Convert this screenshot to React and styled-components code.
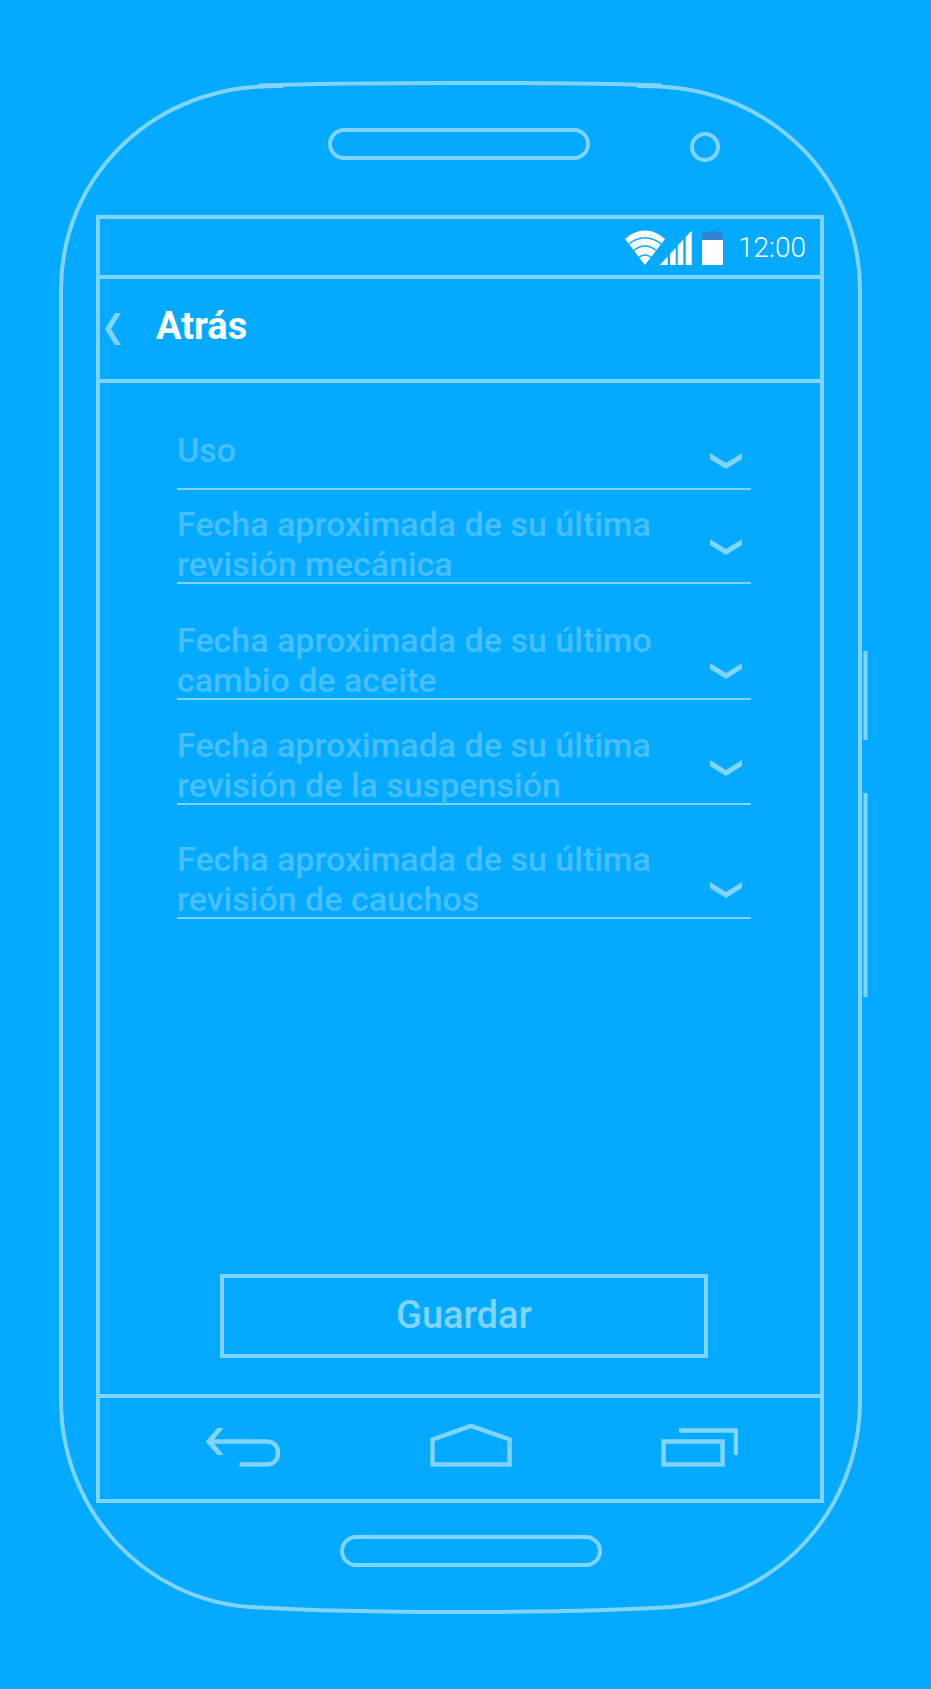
import React from "react";
import styled, { createGlobalStyle, ThemeProvider } from "styled-components";

const theme = {
  bg: "#03aaff",
  line: "#81d4fd",
  muted: "#48bffe",
  text: "#ffffff",
  battery: "#3183cf",
};

const GlobalStyle = createGlobalStyle`
  *, *::before, *::after { box-sizing: border-box; }
  body {
    margin: 0;
    background: ${theme.bg};
    font-family: Roboto, "Liberation Sans", sans-serif;
  }
  button { font-family: inherit; }
`;

const Page = styled.main`
  padding: 81px 69px 75px 59px;
`;

const Phone = styled.div`
  position: relative;
  display: flex;
  flex-direction: column;
  padding: 47px 38px 47px 37px;
`;

const Outline = styled.svg`
  position: absolute;
  inset: 0;
  width: 100%;
  height: 100%;
  overflow: visible;
  pointer-events: none;
  fill: none;
  stroke: ${(p) => p.theme.line};
  stroke-width: 4;

  path { vector-effect: non-scaling-stroke; }
`;

const PhoneTop = styled.div`
  display: grid;
  grid-template-columns: 1fr auto 1fr;
  column-gap: 100px;
  height: 34px;
  margin-bottom: 53px;
  padding-right: 2px;
`;

const Pill = styled.div`
  grid-column: 2;
  width: 262px;
  height: 32px;
  border: 4px solid ${(p) => p.theme.line};
  border-radius: 16px;
`;

const Camera = styled.div`
  align-self: end;
  width: 30px;
  height: 30px;
  border: 4px solid ${(p) => p.theme.line};
  border-radius: 50%;
`;

const PhoneBottom = styled.div`
  display: flex;
  justify-content: center;
  padding: 32px 0 0 22px;
`;

const Screen = styled.div`
  border: 4px solid ${(p) => p.theme.line};
`;

const StatusBar = styled.div`
  display: flex;
  align-items: center;
  justify-content: flex-end;
  height: 60px;
  padding-right: 14px;
  border-bottom: 4px solid ${(p) => p.theme.line};
`;

const SignalIcons = styled.svg`
  width: 67px;
  height: 35px;
  margin-right: 10px;
  fill: ${(p) => p.theme.text};
`;

const BatteryIcon = styled.svg`
  width: 21px;
  height: 35px;
  margin-right: 15px;
`;

const Clock = styled.time`
  padding-top: 1px;
  color: ${(p) => p.theme.text};
  font-size: 28px;
  font-weight: 300;
  line-height: 32px;
`;

const AppBar = styled.header`
  display: flex;
  height: 104px;
  padding: 0 5px;
  border-bottom: 4px solid ${(p) => p.theme.line};
`;

const BackButton = styled.button`
  display: flex;
  align-items: center;
  gap: 35px;
  height: 100px;
  padding: 0;
  border: 0;
  background: none;
  color: ${(p) => p.theme.text};
  font-size: 38px;
  font-weight: 700;
  line-height: 40px;
  cursor: pointer;

  svg { width: 16px; height: 32px; fill: ${(p) => p.theme.line}; }
`;

const Title = styled.span`
  padding-bottom: 6px;
`;

const Form = styled.form`
  display: flex;
  flex-direction: column;
  padding: 47px 69px 36px 77px;
`;

const Field = styled.div`
  display: grid;
  grid-template-columns: 1fr 32px;
  align-items: end;
  margin-top: ${(p) => p.$space}px;
  padding-right: 9px;
  border-bottom: 2px solid ${(p) => p.theme.line};
`;

const Label = styled.label`
  grid-area: 1 / 1;
  margin-bottom: ${(p) => (p.$single ? 18 : -2)}px;
  color: ${(p) => p.theme.muted};
  font-size: 34px;
  font-weight: 500;
  line-height: 40px;
`;

const Chevron = styled.svg`
  grid-area: 1 / 2;
  width: 32px;
  height: 16px;
  margin-bottom: ${(p) => (p.$raised ? 27 : 19)}px;
  fill: ${(p) => p.theme.line};
`;

const Select = styled.select`
  grid-area: 1 / 1 / 2 / 3;
  align-self: stretch;
  width: 100%;
  border: 0;
  background: transparent;
  appearance: none;
  cursor: pointer;
`;

const SaveButton = styled.button`
  align-self: center;
  width: 85%;
  height: 84px;
  margin-top: 355px;
  padding: 0 0 2px;
  border: 4px solid ${(p) => p.theme.line};
  background: none;
  color: ${(p) => p.theme.line};
  font-size: 38px;
  font-weight: 500;
  line-height: 40px;
  cursor: pointer;
`;

const NavBar = styled.nav`
  display: flex;
  justify-content: space-between;
  height: 105px;
  padding: 25px 82px 0 105px;
  border-top: 4px solid ${(p) => p.theme.line};
`;

const NavButton = styled.button`
  height: 44px;
  padding: 0;
  border: 0;
  background: none;
  cursor: pointer;

  svg {
    display: block;
    height: 44px;
    fill: none;
    stroke: ${(p) => p.theme.line};
    stroke-width: 4.5;
  }
`;

const fields = [
  { id: "uso", lines: ["Uso"], space: 0, single: true },
  { id: "mecanica", lines: ["Fecha aproximada de su última", "revisión mecánica"], space: 14, raised: true },
  { id: "aceite", lines: ["Fecha aproximada de su último", "cambio de aceite"], space: 36 },
  { id: "suspension", lines: ["Fecha aproximada de su última", "revisión de la suspensión"], space: 25, raised: true },
  { id: "cauchos", lines: ["Fecha aproximada de su última", "revisión de cauchos"], space: 34 },
];

function PhoneOutline() {
  return (
    <Outline viewBox="59 81 803 1533" preserveAspectRatio="none" aria-hidden="true">
      <path d="M283 86 Q275 86 262 86.5 C150 91 61 178 61 290 V1400 C61 1511 145 1600 250 1607 Q330 1612 461 1612 Q590 1612 671 1607 C776 1600 860 1511 860 1400 V290 C860 178 771 91 659 86.5 Q646 86 637 86" />
      <path d="M259 85.5 Q330 83 460 83 Q590 83 662 85.5" />
      <path d="M865.5 651 V740" />
      <path d="M865.5 793 V997" />
    </Outline>
  );
}

export default function App() {
  return (
    <ThemeProvider theme={theme}>
      <GlobalStyle />
      <Page>
        <Phone>
          <PhoneOutline />
          <PhoneTop>
            <Pill />
            <Camera />
          </PhoneTop>
          <Screen>
            <StatusBar>
              <SignalIcons viewBox="0 0 67 35" aria-hidden="true">
                <path d="M20 35 L0 9 Q9 0.5 20 0.5 Q31 0.5 40 9 Z" />
                <g fill="none" stroke={theme.bg} strokeWidth="1.3">
                  <path d="M3 14.5 Q20 1 37 14.5" />
                  <path d="M8 21 Q20 11 32 21" />
                  <path d="M13 28 Q20 22 27 28" />
                </g>
                <path d="M35 35 L42.7 26.5 V35 Z M45 35 V24 L50.7 18 V35 Z M52.7 35 V15.5 L58.3 9.5 V35 Z M60.7 35 V7 L66.7 0.7 V35 Z" />
              </SignalIcons>
              <BatteryIcon viewBox="0 0 21 35" aria-hidden="true">
                <path d="M6 1 H15 V3 H21 V10 H0 V3 H6 Z" fill={theme.battery} />
                <rect y="10" width="21" height="25" fill={theme.text} />
              </BatteryIcon>
              <Clock>12:00</Clock>
            </StatusBar>
            <AppBar>
              <BackButton type="button">
                <svg viewBox="0 0 16 32" aria-hidden="true">
                  <path d="M10 0 H16 L6 16 L16 32 H10 L0 16 Z" />
                </svg>
                <Title>Atrás</Title>
              </BackButton>
            </AppBar>
            <Form onSubmit={(e) => e.preventDefault()}>
              {fields.map((f) => (
                <Field key={f.id} $space={f.space}>
                  <Label htmlFor={f.id} $single={f.single}>
                    {f.lines.map((line, i) => (
                      <React.Fragment key={line}>
                        {i > 0 && <br />}
                        {line}
                      </React.Fragment>
                    ))}
                  </Label>
                  <Chevron viewBox="0 0 32 16" $raised={f.raised} aria-hidden="true">
                    <path d="M0 0 L16 10 L32 0 V6 L16 16 L0 6 Z" />
                  </Chevron>
                  <Select id={f.id} defaultValue="">
                    <option value="" />
                  </Select>
                </Field>
              ))}
              <SaveButton type="submit">Guardar</SaveButton>
            </Form>
            <NavBar>
              <NavButton type="button" aria-label="Volver">
                <svg width="76" viewBox="0 0 76 44" aria-hidden="true">
                  <path d="M5 18.5 H61 C69 18.5 73 23.5 73 30 C73 36.5 69 41.5 61 41.5 H34.5" />
                  <path d="M12.5 5 H18.5 L7.5 18.5 L18.5 32 H12.5 L0.5 18.5 Z" fill={theme.line} stroke="none" />
                </svg>
              </NavButton>
              <NavButton type="button" aria-label="Inicio">
                <svg width="82" viewBox="0 0 82 44" aria-hidden="true">
                  <path d="M2.5 41.5 V16.5 L41 3 L79.5 16.5 V41.5 Z" />
                </svg>
              </NavButton>
              <NavButton type="button" aria-label="Recientes">
                <svg width="77" viewBox="0 0 77 44" aria-hidden="true">
                  <path d="M2.5 18.5 H61.5 V41.5 H2.5 Z M18 7.5 H75 V32" />
                </svg>
              </NavButton>
            </NavBar>
          </Screen>
          <PhoneBottom>
            <Pill />
          </PhoneBottom>
        </Phone>
      </Page>
    </ThemeProvider>
  );
}
